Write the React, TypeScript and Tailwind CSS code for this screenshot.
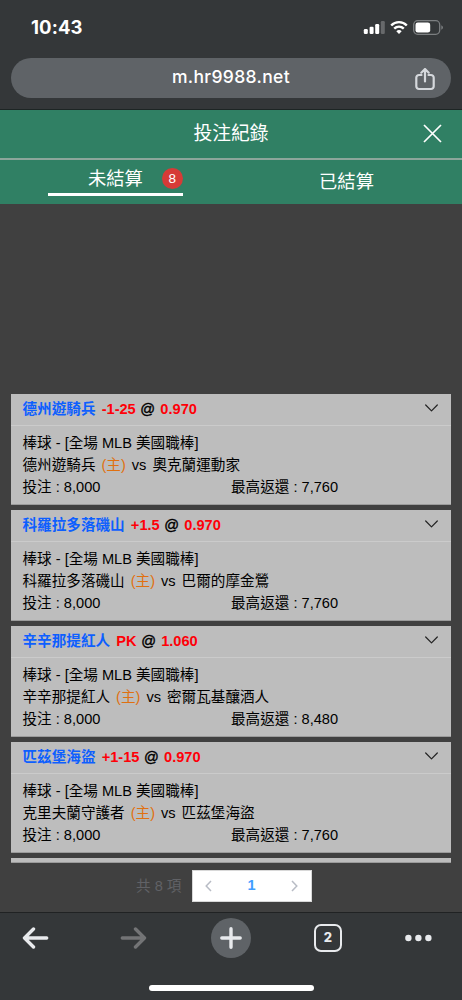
import React from "react";

type Bet = {
  pick: string;
  line: string;
  odds: string;
  home: string;
  away: string;
  stake: string;
  payout: string;
};

const bets: Bet[] = [
  { pick: "德州遊騎兵", line: "-1-25", odds: "0.970", home: "德州遊騎兵", away: "奧克蘭運動家", stake: "8,000", payout: "7,760" },
  { pick: "科羅拉多落磯山", line: "+1.5", odds: "0.970", home: "科羅拉多落磯山", away: "巴爾的摩金鶯", stake: "8,000", payout: "7,760" },
  { pick: "辛辛那提紅人", line: "PK", odds: "1.060", home: "辛辛那提紅人", away: "密爾瓦基釀酒人", stake: "8,000", payout: "8,480" },
  { pick: "匹茲堡海盜", line: "+1-15", odds: "0.970", home: "克里夫蘭守護者", away: "匹茲堡海盜", stake: "8,000", payout: "7,760" },
];

function StatusBar() {
  return (
    <div className="flex h-[58px] shrink-0 items-start justify-between pl-[31px] pr-[19px] text-white">
      <div className="mt-[14px] font-['Inter',sans-serif] text-[18.5px] leading-[27px] font-bold tracking-[0.1px]">10:43</div>
      <div className="mt-[20px] flex h-[16px] items-start">
        <svg width="22" height="16" viewBox="0 0 22 16" fill="#fff">
          <rect x="0.8" y="9" width="4" height="5" rx="1.2" />
          <rect x="6.6" y="6.8" width="4" height="7.2" rx="1.2" />
          <rect x="12.2" y="4" width="4" height="10" rx="1.2" />
          <rect x="17.8" y="1" width="4" height="13" rx="1.2" fill="#67696b" />
        </svg>
        <svg className="ml-[5px]" width="18" height="16" viewBox="0 0 18 16" fill="none" stroke="#fff" strokeWidth="2.4">
          <path d="M1.2 5.5C5.5 1 12.5 1 16.8 5.5" />
          <path d="M4.2 8.7C7 6 11 6 13.8 8.7" />
          <path d="M6.3 11.2Q9 9 11.7 11.2L9 14Z" fill="#fff" stroke="none" />
        </svg>
        <svg className="ml-[5px]" width="30" height="16" viewBox="0 0 30 16">
          <rect x="0.7" y="0.7" width="26" height="13.6" rx="4" fill="none" stroke="#7c7f81" strokeWidth="1.3" />
          <rect x="2.5" y="2.5" width="14.7" height="10" rx="2.3" fill="#fff" />
          <path d="M28.3 5.2Q30 6 30 7.5Q30 9 28.3 9.8Z" fill="#7c7f81" />
        </svg>
      </div>
    </div>
  );
}

function AddressBar() {
  return (
    <div className="mx-[11px] grid h-10 shrink-0 grid-cols-[1fr_auto_1fr] items-center rounded-full bg-[#5f6367]">
      <span />
      <span className="-mt-0.5 font-['Inter',sans-serif] text-[17.5px] leading-6 font-medium tracking-[0.35px] text-white">m.hr9988.net</span>
      <svg className="mt-0.5 mr-[16px] justify-self-end" width="20" height="23" viewBox="0 0 20 23" fill="none" stroke="#d5d8dc" strokeWidth="2.2" strokeLinecap="round" strokeLinejoin="round">
        <path d="M6.5 7H4A2.7 2.7 0 0 0 1.3 9.7V18.3A2.7 2.7 0 0 0 4 21H16A2.7 2.7 0 0 0 18.7 18.3V9.7A2.7 2.7 0 0 0 16 7H13.5M10 13.5V1.3M6.3 4.7L10 1L13.7 4.7" />
      </svg>
    </div>
  );
}

function BetCard({ bet }: { bet: Bet }) {
  return (
    <article className="h-[110.5px] shrink-0 border-b border-[#9b9b9b] bg-[#bdbdbd] text-[14.6px] text-black">
      <header className="flex h-8 items-center justify-between border-b border-[#cbcbcb] pr-[13px] pl-[11.5px]">
        <div className="flex font-bold whitespace-pre text-[#ff0008]">
          <span className="text-[#0d5fff]">{bet.pick}</span>
          <span className="ml-[6.2px]">{bet.line}</span>
          <span className="ml-[4.6px] font-normal text-black [-webkit-text-stroke:0.4px_#000]">@</span>
          <span className="ml-[5.2px]">{bet.odds}</span>
        </div>
        <svg className="-mt-[3px]" width="13" height="8" viewBox="0 0 13 8" fill="none" stroke="#222" strokeWidth="1.2" strokeLinecap="round" strokeLinejoin="round">
          <path d="M0.7 1L6.5 6.8L12.3 1" />
        </svg>
      </header>
      <div className="pt-[5.5px] pl-[11.5px] leading-[22.2px]">
        <p>棒球 - [全場 MLB 美國職棒]</p>
        <p className="flex gap-[6px]">
          <span>{bet.home}</span>
          <span className="text-[#e07010]">(主)</span>
          <span>vs</span>
          <span>{bet.away}</span>
        </p>
        <div className="grid grid-cols-[208.5px_1fr]">
          <span>投注 : {bet.stake}</span>
          <span>最高返還 : {bet.payout}</span>
        </div>
      </div>
    </article>
  );
}

function Pager() {
  return (
    <div className="flex h-[49px] shrink-0 items-start pt-[7px] pl-[136px]">
      <span className="w-[56px] text-[14.6px] leading-[32px] text-[#616266]">共 8 項</span>
      <div className="flex h-8 w-[120px] items-center border border-[#d8d8d8] bg-white text-[#b8bcc5]">
        <svg className="ml-[12px]" width="7" height="12" viewBox="0 0 7 12" fill="none" stroke="currentColor" strokeWidth="1.5">
          <path d="M6 1L1.2 6L6 11" />
        </svg>
        <span className="ml-[35px] w-[9px] text-center text-[14.6px] font-bold text-[#409eff]">1</span>
        <svg className="ml-[35px]" width="7" height="12" viewBox="0 0 7 12" fill="none" stroke="currentColor" strokeWidth="1.5">
          <path d="M1 1L5.8 6L1 11" />
        </svg>
      </div>
    </div>
  );
}

function BrowserToolbar() {
  return (
    <footer className="flex h-[88px] shrink-0 flex-col items-center border-t border-[#202223] bg-[#343739]">
      <nav className="mt-[4.5px] flex h-10 w-full items-center pl-[22px]">
        <svg width="27" height="22" viewBox="0 0 27 22" fill="none" stroke="#e8eaed" strokeWidth="3.4" strokeLinecap="round" strokeLinejoin="round">
          <path d="M24.7 11H2.5M11.5 2L2.5 11L11.5 20" />
        </svg>
        <svg className="ml-[71px]" width="27" height="22" viewBox="0 0 27 22" fill="none" stroke="#737476" strokeWidth="3.4" strokeLinecap="round" strokeLinejoin="round">
          <path d="M2.3 11H24.5M15.5 2L24.5 11L15.5 20" />
        </svg>
        <div className="ml-[64px] flex size-10 items-center justify-center rounded-full bg-[#5f6367]">
          <svg width="22" height="22" viewBox="0 0 22 22" fill="none" stroke="#e8eaed" strokeWidth="3.4" strokeLinecap="round">
            <path d="M1.8 11H20.2M11 1.8V20.2" />
          </svg>
        </div>
        <div className="ml-[63px] flex size-[28px] items-center justify-center rounded-[7px] border-[2.6px] border-[#e8eaed] font-['Inter',sans-serif] text-[13px] leading-none font-extrabold text-[#e8eaed]">2</div>
        <svg className="ml-[63px]" width="27" height="8" viewBox="0 0 27 8" fill="#e8eaed">
          <circle cx="3.4" cy="4" r="3.2" />
          <circle cx="13.4" cy="4" r="3.2" />
          <circle cx="23.4" cy="4" r="3.2" />
        </svg>
      </nav>
      <div className="mt-[27.5px] h-[6px] w-[165px] rounded-full bg-white" />
    </footer>
  );
}

export default function App() {
  return (
    <div className="flex h-[1000px] w-[462px] flex-col overflow-hidden bg-[#343739] font-['Liberation_Sans','Noto_Sans_CJK_TC',sans-serif]">
      <StatusBar />
      <AddressBar />
      <div className="mt-[11px] flex h-[95px] shrink-0 flex-col border-t border-[#1d2524] bg-[#308064] text-[18.8px] text-white">
        <div className="grid h-[50px] shrink-0 grid-cols-[1fr_auto_1fr] items-center border-b-2 border-[#8ca69b]">
          <span />
          <h1>投注紀錄</h1>
          <svg className="mr-[20px] -mt-0.5 justify-self-end" width="19" height="19" viewBox="0 0 19 19" fill="none" stroke="#fff" strokeWidth="1.7">
            <path d="M1 1L18 18M18 1L1 18" />
          </svg>
        </div>
        <div className="grid h-[44px] grid-cols-2">
          <div className="ml-[48px] flex h-[36px] w-[135px] items-center border-b-[3px] border-white pt-1 pl-[40px] leading-none">
            <span className="mt-px text-[18.3px]">未結算</span>
            <span className="ml-[19px] flex size-[21px] shrink-0 items-center justify-center rounded-full bg-[#d63b37] text-[13.5px]">8</span>
          </div>
          <div className="flex h-[44px] items-center justify-center text-[18.3px]">已結算</div>
        </div>
      </div>
      <main className="flex h-[659px] shrink-0 flex-col overflow-hidden bg-[#404040] px-[11px] pt-[190px]">
        <div className="flex flex-col gap-[5.5px]">
          {bets.map((bet) => (
            <BetCard key={bet.pick} bet={bet} />
          ))}
          <div className="h-[5px] shrink-0 border-b border-[#9b9b9b] bg-[#bdbdbd]" />
        </div>
      </main>
      <div className="flex h-[49px] shrink-0 flex-col bg-[#404040]">
        <Pager />
      </div>
      <BrowserToolbar />
    </div>
  );
}
